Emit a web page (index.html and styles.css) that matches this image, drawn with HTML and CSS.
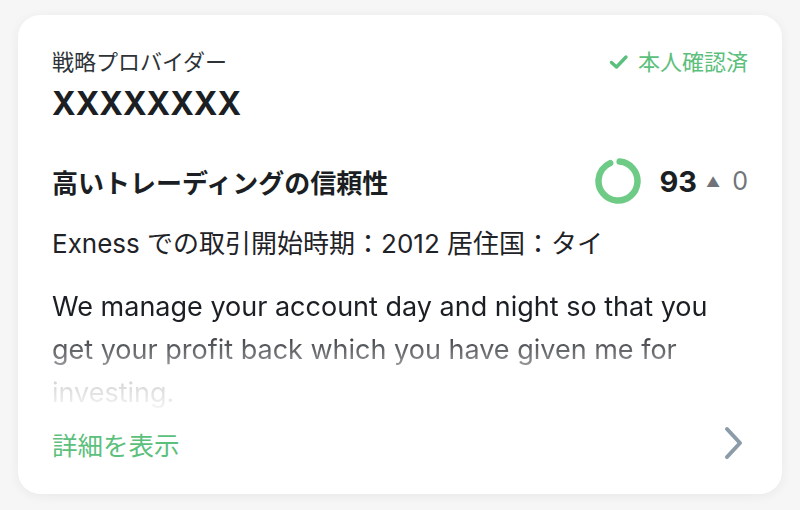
FILE: index.html
```html
<!DOCTYPE html>
<html lang="ja">
<head>
<meta charset="utf-8">
<link rel="stylesheet" href="styles.css">
</head>
<body>
<div class="page">
  <div class="card">
    <div class="top-row">
      <div class="role">戦略プロバイダー</div>
      <div class="verified">
        <svg class="check" width="20" height="16" viewBox="0 0 20 16"><path d="M2.5 8.5 L7.5 13 L17 3" fill="none" stroke="currentColor" stroke-width="3.4" stroke-linecap="round" stroke-linejoin="round"/></svg>
        <span>本人確認済</span>
      </div>
    </div>
    <div class="name">XXXXXXXX</div>
    <div class="score-row">
      <div class="score-title">高いトレーディングの信頼性</div>
      <div class="score">
        <svg class="ring" width="46" height="46" viewBox="0 0 46 46"><circle cx="23" cy="23" r="19.5" fill="none" stroke="#6ecb86" stroke-width="6.5" stroke-linecap="round" stroke-dasharray="112 200" transform="rotate(-85 23 23)"/></svg>
        <span class="score-num">93</span>
        <span class="tri">▲</span>
        <span class="delta">0</span>
      </div>
    </div>
    <div class="meta">Exness での取引開始時期：2012 居住国：タイ</div>
    <p class="desc">We manage your account day and night so that you get your profit back which you have given me for investing.</p>
    <div class="bottom-row">
      <span class="more">詳細を表示</span>
      <svg class="chev" width="22" height="34" viewBox="0 0 22 34"><path d="M4 3 L17 17 L4 31" fill="none" stroke="#8b9ba8" stroke-width="4" stroke-linecap="round" stroke-linejoin="round"/></svg>
    </div>
  </div>
</div>
</body>
</html>
```
FILE: styles.css
```css
* { box-sizing: border-box; }
html, body { margin: 0; padding: 0; }
body {
  background: #f6f6f6;
  font-family: Inter, "Noto Sans CJK JP", sans-serif;
  color: #1b1f24;
}
.page {
  width: 800px;
  height: 510px;
  padding: 15px 18px 16px 18px;
}
.card {
  background: #fff;
  border-radius: 22px;
  box-shadow: 0 2px 12px rgba(0,0,0,0.06);
  height: 479px;
  padding: 32px 34px 0 34px;
  display: flex;
  flex-direction: column;
}
.top-row {
  display: flex;
  justify-content: space-between;
  align-items: center;
  height: 30px;
}
.role {
  font-size: 22px;
  color: #2e3338;
  line-height: 30px;
}
.verified {
  display: flex;
  align-items: center;
  gap: 9px;
  color: #5cc07d;
  font-size: 22px;
  line-height: 30px;
}
.check { color: #5cc07d; }
.name {
  margin-top: 7px;
  font-size: 32px;
  font-weight: 700;
  line-height: 40px;
}
.score-row {
  margin-top: 34px;
  display: flex;
  justify-content: space-between;
  align-items: center;
  height: 46px;
}
.score-title {
  font-size: 26px;
  font-weight: 700;
}
.score {
  display: flex;
  align-items: center;
}
.ring { display: block; margin-right: 19px; }
.score-num {
  font-size: 29px;
  font-weight: 700;
  margin-right: 9px;
}
.tri {
  font-size: 14px;
  color: #707478;
  margin-right: 12px;
}
.delta {
  font-size: 25px;
  color: #70757a;
}
.meta {
  margin-top: 23px;
  font-size: 26px;
  line-height: 34px;
  color: #1f2328;
}
.desc {
  margin: 24px 0 0 0;
  font-size: 27px;
  line-height: 43px;
  color: #1b1f24;
  height: 129px;
  -webkit-mask-image: linear-gradient(to bottom, #000 32%, rgba(0,0,0,0.55) 58%, rgba(0,0,0,0.18) 76%, rgba(0,0,0,0.02) 100%);
  mask-image: linear-gradient(to bottom, #000 32%, rgba(0,0,0,0.55) 58%, rgba(0,0,0,0.18) 76%, rgba(0,0,0,0.02) 100%);
  overflow: hidden;
}
.bottom-row {
  margin-top: 12px;
  display: flex;
  justify-content: space-between;
  align-items: center;
  height: 34px;
}
.more {
  font-size: 25.5px;
  color: #5cc07d;
}
.chev { display: block; margin-right: 3px; }
```
